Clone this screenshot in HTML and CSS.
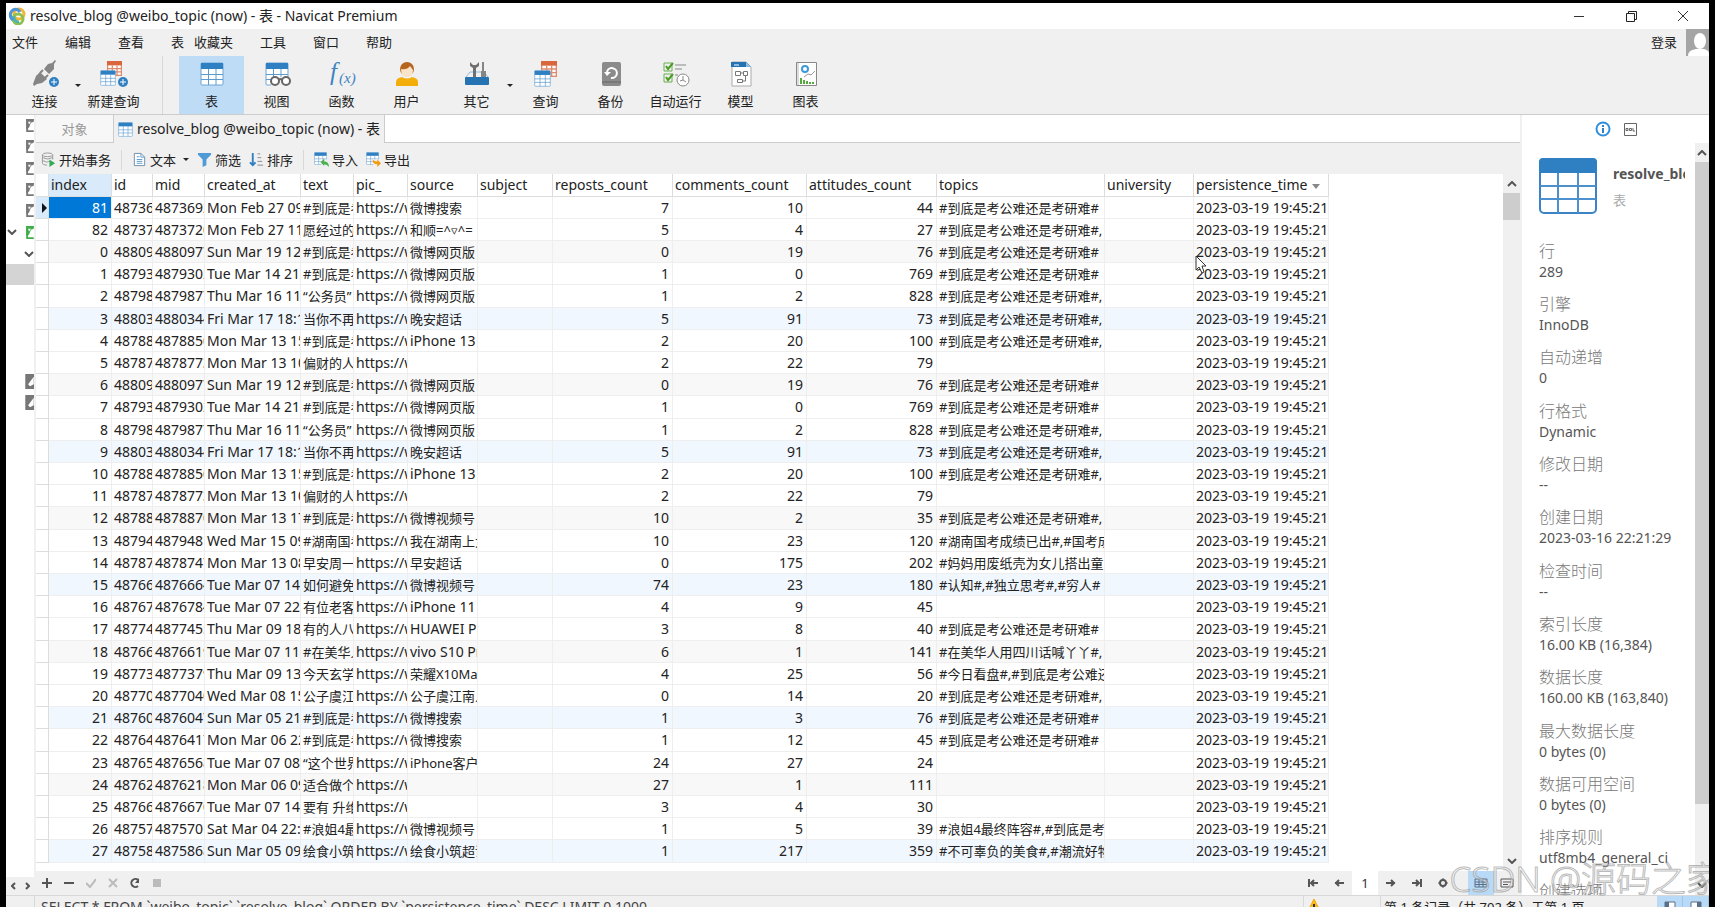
FILE: index.html
```html
<!DOCTYPE html>
<html lang="zh-CN">
<head>
  <meta charset="UTF-8">
  <meta name="viewport" content="width=device-width, initial-scale=1.0">
  <title>resolve_blog @weibo_topic (now) - 表 - Navicat Premium</title>
  <link rel="stylesheet" href="styles.css">
</head>
<body>
  <!-- Shared icons -->
  <svg class="sprite" width="0" height="0">
    <symbol id="i-table" viewBox="0 0 24 24">
      <rect x="1" y="1" width="22" height="22" rx="1" fill="#fff" stroke="#6fa6d3"/>
      <path d="M1 12.500h22M1 17.500h22M8.500 7v16M16 7v16" stroke="#5b9bd0" fill="none"/>
      <rect x="1" y="1" width="22" height="6" fill="#2f7fc3"/>
    </symbol>
    <symbol id="i-table-red" viewBox="0 0 24 24">
      <rect x="1" y="1" width="22" height="22" fill="#fff" stroke="#e08a6c" stroke-width="2"/>
      <path d="M1 12h22M1 17.500h22M8.500 7v16M16 7v16" stroke="#e08a6c" stroke-width="2" fill="none"/>
      <rect x="0" y="0" width="24" height="7" fill="#d9663d"/>
    </symbol>
    <symbol id="i-db" viewBox="0 0 9 16">
      <path d="M9 2H2v12h7" fill="#fff" stroke="currentColor" stroke-width="2"/>
      <path d="M1 1h8v3L6 5 4 10 1 12z" fill="currentColor"/>
      <path d="M3 4h3L4 7z" fill="#fff"/>
    </symbol>
    <symbol id="i-db-off" viewBox="0 0 9 16">
      <path d="M1 1h12v14H1z" fill="#777" stroke="#777" stroke-width="2"/>
      <path d="M3 11L9 3v8l-4 2z" fill="#fff"/>
    </symbol>
    <symbol id="i-up" viewBox="0 0 10 6"><path d="M1 5l4-4 4 4" fill="none" stroke="#555" stroke-width="2"/></symbol>
    <symbol id="i-down" viewBox="0 0 10 6"><path d="M1 1l4 4 4-4" fill="none" stroke="#555" stroke-width="2"/></symbol>
  </svg>

  <div class="window">
    <header class="titlebar">
      <svg class="logo" viewBox="0 0 18 18" fill="none" stroke-width="3">
        <circle cx="11" cy="7" r="5" stroke="#f2b632"/>
        <circle cx="10" cy="12" r="5" stroke="#8cc152"/>
        <path d="M11 15a5 5 0 0 1-5-6" stroke="#4db6ac"/>
        <path d="M5 13a6 6 0 0 1 0-10 5 5 0 0 1 7 2" stroke="#4f93d8"/>
      </svg>
      <h1>resolve_blog @weibo_topic (now) - 表 - Navicat Premium</h1>
      <div class="window-buttons">
        <button aria-label="最小化"><svg width="12" height="12"><path d="M1 6.500h10" stroke="#333"/></svg></button>
        <button aria-label="还原"><svg width="12" height="12" fill="none" stroke="#222"><path d="M1.500 3.500h8v8h-8zM3.500 3v-1.500h8v8H10"/></svg></button>
        <button aria-label="关闭"><svg width="12" height="12"><path d="M1 1l10 10M11 1L1 11" stroke="#333"/></svg></button>
      </div>
    </header>

    <nav class="menubar">
      <button>文件</button>
      <button>编辑</button>
      <button>查看</button>
      <button class="tight">表</button>
      <button>收藏夹</button>
      <button>工具</button>
      <button>窗口</button>
      <button>帮助</button>
      <button class="login">登录</button>
      <svg class="avatar" viewBox="0 0 23 27"><path d="M0 0h23v27H0z" fill="#a5a5a5"/><ellipse cx="14" cy="12" rx="6" ry="8" fill="#fff"/><path d="M2 27c0-5 4-6 8-7h8c3 1 5 2 5 4v3z" fill="#fff"/></svg>
    </nav>

    <div class="toolbar">
      <button class="tool">
        <svg viewBox="0 0 28 28"><g fill="#858585"><path d="M2 24l3-8 4-4 7 7-5 4-5 1-3 2z"/><path d="M13 9l4-5 4-1 3-3 1 1-2 3v5l-5 5z"/></g><path d="M9 13l3-3M14 18l3-3" stroke="#858585" stroke-width="2"/><circle cx="23" cy="22" r="5" fill="#2f7fc3"/><path d="M20 22h6M23 19v6" stroke="#fff"/></svg>
        连接
      </button>
      <i class="caret"></i>
      <button class="tool">
        <svg viewBox="0 0 28 28"><use href="#i-table-red" x="7" y="1" width="15" height="15"/><use href="#i-table" x="0" y="10" width="16" height="16"/><circle cx="23" cy="22" r="5" fill="#2f7fc3"/><path d="M20 22h6M23 19v6" stroke="#fff"/></svg>
        新建查询
      </button>
      <i class="divider"></i>
      <button class="tool active">
        <svg viewBox="0 0 28 28"><use href="#i-table" x="2" y="2" width="24" height="24"/></svg>
        表
      </button>
      <button class="tool">
        <svg viewBox="0 0 28 28"><use href="#i-table" x="2" y="2" width="24" height="24"/><path d="M8 17h20v11H8z" fill="#f0f0f0"/><g fill="#fff" stroke="#666" stroke-width="2"><circle cx="12" cy="21" r="4"/><circle cx="23" cy="21" r="4"/><path d="M16 20q1.500-2 3 0" fill="none"/></g></svg>
        视图
      </button>
      <button class="tool">
        <svg viewBox="0 0 28 28" class="fx"><text x="2" y="20" font-size="25">f</text><text x="11" y="23" font-size="15">(x)</text></svg>
        函数
      </button>
      <button class="tool">
        <svg viewBox="0 0 28 28"><circle cx="14" cy="9" r="7" fill="#b5651d"/><path d="M8 9q6 1 9-3l3 4q0 7-6 7T8 9z" fill="#fbe3c8"/><path d="M3 26v-4q0-4 6-5 5 3 10 0 6 1 6 5v4z" fill="#f4ae0c"/></svg>
        用户
      </button>
      <button class="tool gap">
        <svg viewBox="0 0 28 28"><path d="M3 17l4-5h14l4 5" fill="none" stroke="#8dbce4" stroke-width="1"/><path d="M7 2v4l3 2v9h3V8l3-2V2l-3 3h-3z" fill="#707070"/><path d="M19 2h2v9h2v6h-5v-6h1z" fill="#858585"/><rect x="2" y="17" width="24" height="8" rx="1" fill="#2673b4"/></svg>
        其它
      </button>
      <i class="caret"></i>
      <button class="tool">
        <svg viewBox="0 0 28 28"><use href="#i-table-red" x="9" y="1" width="16" height="16"/><use href="#i-table" x="2" y="10" width="17" height="17"/></svg>
        查询
      </button>
      <button class="tool">
        <svg viewBox="0 0 28 28"><rect x="5" y="2" width="19" height="24" rx="2" fill="#8b8b8b"/><path d="M5 22h19" stroke="#666"/><path d="M10 12a5 5 0 1 1 4 6" fill="none" stroke="#fff" stroke-width="2"/><path d="M7 12h7l-4 4z" fill="#fff"/></svg>
        备份
      </button>
      <button class="tool">
        <svg viewBox="0 0 28 28" fill="none"><path d="M2 3h8v8H2zM2 14h8v8H2z" stroke="#68b04a"/><path d="M4 6l2 3 5-6M4 17l2 3 5-6" stroke="#4c9a2a" stroke-width="2"/><path d="M13 5h11M13 9h7M13 15h3" stroke="#888"/><circle cx="21" cy="20" r="6" fill="#fff" stroke="#888"/><path d="M21 16v4l-3 1M21 20l3 2" stroke="#888"/></svg>
        自动运行
      </button>
      <button class="tool">
        <svg viewBox="0 0 28 28" fill="none"><path d="M5 2h14l5 5v19H5z" fill="#fff" stroke="#aaa"/><path d="M4 2h15l5 5H4z" fill="#2673b4"/><path d="M19 2v5h5z" fill="#8dbce4"/><path d="M7 5h5" stroke="#fff"/><path d="M8.500 11.500h5v4h-5zM16.500 11.500h4v4h-4zM10.500 19.500h5v3h-5zM14 13h2M18.500 16v5H16" stroke="#777"/></svg>
        模型
      </button>
      <button class="tool">
        <svg viewBox="0 0 28 28" fill="none"><path d="M4.500 2.500h20v23h-20z" fill="#fff" stroke="#888"/><path d="M6 3v22" stroke="#bbb"/><circle cx="13" cy="9" r="3" stroke="#3d9bd8" stroke-width="2"/><path d="M12 17l4-3 3 1 4-4" stroke="#999"/><path d="M9 18v6M12 20v4M15 21v3M18 22v2M21 22v2" stroke="#53ab3b" stroke-width="2"/></svg>
        图表
      </button>
    </div>

    <div class="workspace">
      <aside class="tree">
        <ul>
          <li><svg class="db"><use href="#i-db"/></svg></li>
          <li><svg class="db"><use href="#i-db"/></svg></li>
          <li><svg class="db"><use href="#i-db"/></svg></li>
          <li><svg class="db"><use href="#i-db"/></svg></li>
          <li><svg class="db"><use href="#i-db"/></svg></li>
          <li><svg class="chevron"><use href="#i-down"/></svg><svg class="db open"><use href="#i-db"/></svg></li>
          <li><svg class="chevron"><use href="#i-down"/></svg></li>
          <li class="selected"></li>
          <li></li>
          <li></li>
          <li></li>
          <li></li>
          <li><svg class="db"><use href="#i-db-off"/></svg></li>
          <li><svg class="db"><use href="#i-db-off"/></svg></li>
        </ul>
        <div class="tree-scroll">
          <svg width="5" height="8"><path d="M4 1L1 4l3 3" fill="none" stroke="#555" stroke-width="2"/></svg>
          <svg width="5" height="8"><path d="M1 1l3 3-3 3" fill="none" stroke="#555" stroke-width="2"/></svg>
        </div>
      </aside>

      <main class="main">
        <div class="tabs">
          <button class="tab">对象</button>
          <button class="tab current"><svg width="15" height="15"><use href="#i-table"/></svg>resolve_blog @weibo_topic (now) - 表</button>
        </div>

        <div class="actions">
          <button><svg viewBox="0 0 16 16" fill="none"><path d="M1.500 3v9q0 2 5 2M12.500 3v5M1.500 6q5 3 11 0M1.500 9q5 3 8 1" stroke="#999"/><ellipse cx="7" cy="3" rx="5.500" ry="2" stroke="#999"/><path d="M9 8l6 4-6 4z" fill="#35a853"/></svg>开始事务</button>
          <i class="divider"></i>
          <button><svg viewBox="0 0 16 16" fill="none"><path d="M2.500 1.500h7l4 4v9h-11z" fill="#fff" stroke="#6f8ca8"/><path d="M9.500 1.500v4h4M5 8h6M5 10h6M5 12h6M5 5h3" stroke="#5b9bd0"/></svg>文本<i class="caret"></i></button>
          <button><svg viewBox="0 0 16 16"><path d="M1 1h14v2l-5 5v6l-4 2V8L1 3z" fill="#4f9bd8"/></svg>筛选</button>
          <button><svg viewBox="0 0 16 16" fill="none"><path d="M4 1v13M1 11l3 3 3-3" stroke="#2f7fc3" stroke-width="2"/><path d="M9 2h3M9 6h4M9 10h5M9 14h6" stroke="#888"/></svg>排序</button>
          <i class="divider"></i>
          <button><svg viewBox="0 0 16 16"><use href="#i-table" width="14" height="14"/><path d="M8 8h8v8H8z" fill="#f0f0f0"/><path d="M7 11l4-4v3q5 0 5 6-2-3-5-3v2z" fill="#4caf50"/></svg>导入</button>
          <button><svg viewBox="0 0 16 16"><use href="#i-table" width="14" height="14"/><path d="M8 8h8v8H8z" fill="#f0f0f0"/><path d="M16 12l-4 4v-3q-5 0-5-5 2 2 5 2V8z" fill="#f39c12"/></svg>导出</button>
        </div>

        <div class="grid-area">
          <div class="grid-body">
            <table class="grid">
              <colgroup>
                <col class="c-mark"><col class="c-index"><col class="c-id"><col class="c-mid"><col class="c-created"><col class="c-text"><col class="c-pic"><col class="c-source"><col class="c-subject"><col class="c-reposts"><col class="c-comments"><col class="c-attitudes"><col class="c-topics"><col class="c-university"><col class="c-time">
              </colgroup>
              <thead>
                <tr><th></th><th class="sel">index</th><th>id</th><th>mid</th><th>created_at</th><th>text</th><th>pic_</th><th>source</th><th>subject</th><th>reposts_count</th><th>comments_count</th><th>attitudes_count</th><th>topics</th><th>university</th><th>persistence_time <i class="sort"></i></th></tr>
              </thead>
              <tbody>
                <tr><td class="mark"><i></i></td><td class="sel">81</td><td>487369</td><td>4873692</td><td>Mon Feb 27 09</td><td>#到底是考</td><td>https://w</td><td class="cn">微博搜索</td><td></td><td>7</td><td>10</td><td>44</td><td>#到底是考公难还是考研难#</td><td></td><td>2023-03-19 19:45:21</td></tr>
                <tr><td></td><td>82</td><td>487372</td><td>4873720</td><td>Mon Feb 27 11</td><td>愿经过的</td><td>https://w</td><td class="cn">和顺=^▿^=</td><td></td><td>5</td><td>4</td><td>27</td><td>#到底是考公难还是考研难#,</td><td></td><td>2023-03-19 19:45:21</td></tr>
                <tr><td></td><td>0</td><td>488097</td><td>4880977</td><td>Sun Mar 19 12</td><td>#到底是考</td><td>https://w</td><td class="cn">微博网页版</td><td></td><td>0</td><td>19</td><td>76</td><td>#到底是考公难还是考研难#</td><td></td><td>2023-03-19 19:45:21</td></tr>
                <tr><td></td><td>1</td><td>487930</td><td>4879302</td><td>Tue Mar 14 21</td><td>#到底是考</td><td>https://w</td><td class="cn">微博网页版</td><td></td><td>1</td><td>0</td><td>769</td><td>#到底是考公难还是考研难#</td><td></td><td>2023-03-19 19:45:21</td></tr>
                <tr><td></td><td>2</td><td>487987</td><td>4879877</td><td>Thu Mar 16 11</td><td>“公务员”</td><td>https://w</td><td class="cn">微博网页版</td><td></td><td>1</td><td>2</td><td>828</td><td>#到底是考公难还是考研难#,</td><td></td><td>2023-03-19 19:45:21</td></tr>
                <tr><td></td><td>3</td><td>488034</td><td>4880344</td><td>Fri Mar 17 18:1</td><td>当你不再</td><td>https://w</td><td class="cn">晚安超话</td><td></td><td>5</td><td>91</td><td>73</td><td>#到底是考公难还是考研难#,</td><td></td><td>2023-03-19 19:45:21</td></tr>
                <tr><td></td><td>4</td><td>487885</td><td>4878850</td><td>Mon Mar 13 15</td><td>#到底是考</td><td>https://w</td><td>iPhone 13</td><td></td><td>2</td><td>20</td><td>100</td><td>#到底是考公难还是考研难#,</td><td></td><td>2023-03-19 19:45:21</td></tr>
                <tr><td></td><td>5</td><td>487877</td><td>4878773</td><td>Mon Mar 13 10</td><td>偏财的人</td><td>https://w</td><td></td><td></td><td>2</td><td>22</td><td>79</td><td></td><td></td><td>2023-03-19 19:45:21</td></tr>
                <tr><td></td><td>6</td><td>488097</td><td>4880977</td><td>Sun Mar 19 12</td><td>#到底是考</td><td>https://w</td><td class="cn">微博网页版</td><td></td><td>0</td><td>19</td><td>76</td><td>#到底是考公难还是考研难#</td><td></td><td>2023-03-19 19:45:21</td></tr>
                <tr><td></td><td>7</td><td>487930</td><td>4879302</td><td>Tue Mar 14 21</td><td>#到底是考</td><td>https://w</td><td class="cn">微博网页版</td><td></td><td>1</td><td>0</td><td>769</td><td>#到底是考公难还是考研难#</td><td></td><td>2023-03-19 19:45:21</td></tr>
                <tr><td></td><td>8</td><td>487987</td><td>4879877</td><td>Thu Mar 16 11</td><td>“公务员”</td><td>https://w</td><td class="cn">微博网页版</td><td></td><td>1</td><td>2</td><td>828</td><td>#到底是考公难还是考研难#,</td><td></td><td>2023-03-19 19:45:21</td></tr>
                <tr><td></td><td>9</td><td>488034</td><td>4880344</td><td>Fri Mar 17 18:1</td><td>当你不再</td><td>https://w</td><td class="cn">晚安超话</td><td></td><td>5</td><td>91</td><td>73</td><td>#到底是考公难还是考研难#,</td><td></td><td>2023-03-19 19:45:21</td></tr>
                <tr><td></td><td>10</td><td>487885</td><td>4878850</td><td>Mon Mar 13 15</td><td>#到底是考</td><td>https://w</td><td>iPhone 13</td><td></td><td>2</td><td>20</td><td>100</td><td>#到底是考公难还是考研难#,</td><td></td><td>2023-03-19 19:45:21</td></tr>
                <tr><td></td><td>11</td><td>487877</td><td>4878773</td><td>Mon Mar 13 10</td><td>偏财的人</td><td>https://w</td><td></td><td></td><td>2</td><td>22</td><td>79</td><td></td><td></td><td>2023-03-19 19:45:21</td></tr>
                <tr><td></td><td>12</td><td>487887</td><td>4878870</td><td>Mon Mar 13 17</td><td>#到底是考</td><td>https://w</td><td class="cn">微博视频号</td><td></td><td>10</td><td>2</td><td>35</td><td>#到底是考公难还是考研难#,</td><td></td><td>2023-03-19 19:45:21</td></tr>
                <tr><td></td><td>13</td><td>487948</td><td>4879481</td><td>Wed Mar 15 09</td><td>#湖南国考</td><td>https://w</td><td class="cn">我在湖南上大</td><td></td><td>10</td><td>23</td><td>120</td><td>#湖南国考成绩已出#,#国考成</td><td></td><td>2023-03-19 19:45:21</td></tr>
                <tr><td></td><td>14</td><td>487874</td><td>4878747</td><td>Mon Mar 13 08</td><td>早安周一</td><td>https://w</td><td class="cn">早安超话</td><td></td><td>0</td><td>175</td><td>202</td><td>#妈妈用废纸壳为女儿搭出童</td><td></td><td>2023-03-19 19:45:21</td></tr>
                <tr><td></td><td>15</td><td>487666</td><td>4876664</td><td>Tue Mar 07 14</td><td>如何避免</td><td>https://w</td><td class="cn">微博视频号</td><td></td><td>74</td><td>23</td><td>180</td><td>#认知#,#独立思考#,#穷人#</td><td></td><td>2023-03-19 19:45:21</td></tr>
                <tr><td></td><td>16</td><td>487678</td><td>4876784</td><td>Tue Mar 07 22</td><td>有位老客</td><td>https://w</td><td>iPhone 11</td><td></td><td>4</td><td>9</td><td>45</td><td></td><td></td><td>2023-03-19 19:45:21</td></tr>
                <tr><td></td><td>17</td><td>487745</td><td>4877455</td><td>Thu Mar 09 18</td><td>有的人八</td><td>https://w</td><td>HUAWEI P5</td><td></td><td>3</td><td>8</td><td>40</td><td>#到底是考公难还是考研难#</td><td></td><td>2023-03-19 19:45:21</td></tr>
                <tr><td></td><td>18</td><td>487661</td><td>4876619</td><td>Tue Mar 07 11</td><td>#在美华人</td><td>https://w</td><td>vivo S10 Pro</td><td></td><td>6</td><td>1</td><td>141</td><td>#在美华人用四川话喊丫丫#,</td><td></td><td>2023-03-19 19:45:21</td></tr>
                <tr><td></td><td>19</td><td>487737</td><td>4877379</td><td>Thu Mar 09 13</td><td>今天玄学</td><td>https://w</td><td class="cn">荣耀X10Max</td><td></td><td>4</td><td>25</td><td>56</td><td>#今日看盘#,#到底是考公难还</td><td></td><td>2023-03-19 19:45:21</td></tr>
                <tr><td></td><td>20</td><td>487704</td><td>4877040</td><td>Wed Mar 08 15</td><td>公子虞江</td><td>https://w</td><td class="cn">公子虞江南人</td><td></td><td>0</td><td>14</td><td>20</td><td>#到底是考公难还是考研难#,</td><td></td><td>2023-03-19 19:45:21</td></tr>
                <tr><td></td><td>21</td><td>487604</td><td>4876047</td><td>Sun Mar 05 21</td><td>#到底是考</td><td>https://w</td><td class="cn">微博搜索</td><td></td><td>1</td><td>3</td><td>76</td><td>#到底是考公难还是考研难#</td><td></td><td>2023-03-19 19:45:21</td></tr>
                <tr><td></td><td>22</td><td>487641</td><td>4876417</td><td>Mon Mar 06 22</td><td>#到底是考</td><td>https://w</td><td class="cn">微博搜索</td><td></td><td>1</td><td>12</td><td>45</td><td>#到底是考公难还是考研难#</td><td></td><td>2023-03-19 19:45:21</td></tr>
                <tr><td></td><td>23</td><td>487656</td><td>4876568</td><td>Tue Mar 07 08</td><td>“这个世界</td><td>https://w</td><td class="cn">iPhone客户</td><td></td><td>24</td><td>27</td><td>24</td><td></td><td></td><td>2023-03-19 19:45:21</td></tr>
                <tr><td></td><td>24</td><td>487621</td><td>4876218</td><td>Mon Mar 06 09</td><td>适合做个</td><td>https://w</td><td></td><td></td><td>27</td><td>1</td><td>111</td><td></td><td></td><td>2023-03-19 19:45:21</td></tr>
                <tr><td></td><td>25</td><td>487667</td><td>4876670</td><td>Tue Mar 07 14</td><td>要有 升维</td><td>https://w</td><td></td><td></td><td>3</td><td>4</td><td>30</td><td></td><td></td><td>2023-03-19 19:45:21</td></tr>
                <tr><td></td><td>26</td><td>487570</td><td>4875701</td><td>Sat Mar 04 22:</td><td>#浪姐4最</td><td>https://w</td><td class="cn">微博视频号</td><td></td><td>1</td><td>5</td><td>39</td><td>#浪姐4最终阵容#,#到底是考</td><td></td><td>2023-03-19 19:45:21</td></tr>
                <tr><td></td><td>27</td><td>487586</td><td>4875868</td><td>Sun Mar 05 09</td><td>绘食小筑</td><td>https://w</td><td class="cn">绘食小筑超话</td><td></td><td>1</td><td>217</td><td>359</td><td>#不可辜负的美食#,#潮流好物</td><td></td><td>2023-03-19 19:45:21</td></tr>
              </tbody>
            </table>
          </div>
          <div class="scrollbar">
            <svg width="10" height="6"><use href="#i-up"/></svg>
            <div class="thumb short"></div>
            <svg width="10" height="6"><use href="#i-down"/></svg>
          </div>
        </div>

        <div class="record-bar">
          <div class="edit-buttons">
            <button aria-label="添加"><svg viewBox="0 0 10 10"><path d="M5 0v10M0 5h10" stroke="#555" stroke-width="2"/></svg></button>
            <button aria-label="删除"><svg viewBox="0 0 10 10"><path d="M0 5h10" stroke="#555" stroke-width="2"/></svg></button>
            <button aria-label="应用"><svg viewBox="0 0 10 10"><path d="M0 5l4 4 6-8" fill="none" stroke="#bbb" stroke-width="2"/></svg></button>
            <button aria-label="放弃"><svg viewBox="0 0 10 10"><path d="M1 1l8 8M9 1L1 9" stroke="#bbb" stroke-width="2"/></svg></button>
            <button aria-label="刷新"><svg viewBox="0 0 10 10"><path d="M8 8a4 4 0 1 1 0-6" fill="none" stroke="#555" stroke-width="2"/><path d="M9 0v5H5z" fill="#555"/></svg></button>
            <button aria-label="停止"><svg viewBox="0 0 10 10"><path d="M1 1h8v8H1z" fill="#bbb"/></svg></button>
          </div>
          <div class="page-buttons">
            <button aria-label="首页"><svg viewBox="0 0 10 10"><path d="M1 1v8M3 5h7M6 2L3 5l3 3" fill="none" stroke="#555" stroke-width="2"/></svg></button>
            <button aria-label="上一页"><svg viewBox="0 0 10 10"><path d="M1 5h9M5 2L2 5l3 3" fill="none" stroke="#555" stroke-width="2"/></svg></button>
            <input type="text" value="1" aria-label="页码">
            <button aria-label="下一页"><svg viewBox="0 0 10 10"><path d="M0 5h9M5 2l3 3-3 3" fill="none" stroke="#555" stroke-width="2"/></svg></button>
            <button aria-label="末页"><svg viewBox="0 0 10 10"><path d="M9 1v8M0 5h7M4 2l3 3-3 3" fill="none" stroke="#555" stroke-width="2"/></svg></button>
            <button aria-label="设置"><svg viewBox="0 0 10 10"><circle cx="5" cy="5" r="3" fill="none" stroke="#555" stroke-width="2"/><path d="M5 0v2M5 8v2M0 5h2M8 5h2" stroke="#555"/></svg></button>
            <button class="view on" aria-label="网格查看"><svg viewBox="0 0 14 10"><path d="M1 1h12v8H1zM1 4h12M1 6.500h12M5 1v8M9 1v8" fill="none" stroke="#5b6f86"/></svg></button>
            <button class="view" aria-label="表单查看"><svg viewBox="0 0 14 10"><path d="M1 1h12v8H1zM3 4h8M3 6.500h5" fill="none" stroke="#555"/></svg></button>
          </div>
        </div>
      </main>

      <aside class="info">
        <div class="info-tabs">
          <button aria-label="常规"><svg width="16" height="16"><circle cx="8" cy="8" r="6.500" fill="#fff" stroke="#2f8fdc" stroke-width="2"/><path d="M8 4v2M8 7v5" stroke="#2f7fc3" stroke-width="2"/></svg></button>
          <button aria-label="DDL"><svg width="13" height="13"><path d="M.500.500h12v12H.500z" fill="#fff" stroke="#666"/><path d="M2 5.500h2v2H2zM5.500 5.500h2v2h-2zM9 5v3h2" fill="none" stroke="#666"/></svg></button>
        </div>
        <div class="info-main">
          <div class="info-content">
            <div class="info-head">
              <svg viewBox="0 0 58 56"><rect x="1" y="1" width="56" height="54" rx="4" fill="#fff" stroke="#3b83c4" stroke-width="2"/><path d="M1 28h56M1 41h56M19 15v40M39 15v40" stroke="#4c91cd" stroke-width="2"/><path d="M0 15V4q0-4 4-4h50q4 0 4 4v11z" fill="#2f7fc3"/></svg>
              <div>
                <h2>resolve_blog</h2>
                <p>表</p>
              </div>
            </div>
            <dl>
              <div><dt>行</dt><dd>289</dd></div>
              <div><dt>引擎</dt><dd>InnoDB</dd></div>
              <div><dt>自动递增</dt><dd>0</dd></div>
              <div><dt>行格式</dt><dd>Dynamic</dd></div>
              <div><dt>修改日期</dt><dd>--</dd></div>
              <div><dt>创建日期</dt><dd>2023-03-16 22:21:29</dd></div>
              <div><dt>检查时间</dt><dd>--</dd></div>
              <div><dt>索引长度</dt><dd>16.00 KB (16,384)</dd></div>
              <div><dt>数据长度</dt><dd>160.00 KB (163,840)</dd></div>
              <div><dt>最大数据长度</dt><dd>0 bytes (0)</dd></div>
              <div><dt>数据可用空间</dt><dd>0 bytes (0)</dd></div>
              <div><dt>排序规则</dt><dd>utf8mb4_general_ci</dd></div>
              <div><dt>创建选项</dt><dd></dd></div>
            </dl>
          </div>
          <div class="scrollbar narrow">
            <svg width="10" height="6"><use href="#i-up"/></svg>
            <div class="thumb long"></div>
            <svg width="10" height="6"><use href="#i-down"/></svg>
          </div>
        </div>
      </aside>
    </div>

    <footer class="status">
      <span class="sql">SELECT * FROM `weibo_topic`.`resolve_blog` ORDER BY `persistence_time` DESC LIMIT 0,1000</span>
      <span class="warn"><svg width="16" height="16"><path d="M8 1l7 14H1z" fill="#fbbc1c" stroke="#f4a900"/><path d="M8 6v5M8 12v1" stroke="#333" stroke-width="2"/></svg></span>
      <span class="records">第 1 条记录（共 702 条）于第 1 页</span>
      <button aria-label="左侧面板"><svg width="12" height="12"><path d="M1 1h10v10H1z" fill="#fff" stroke="#5b6f86"/><path d="M1 1h4v10H1z" fill="#5b6f86"/></svg></button>
      <button aria-label="右侧面板"><svg width="12" height="12"><path d="M1 1h10v10H1z" fill="#fff" stroke="#5b6f86"/><path d="M7 1h4v10H7z" fill="#5b6f86"/></svg></button>
    </footer>

    <svg class="cursor" width="13" height="20"><path d="M1 1v14l3-3 3 6 2-1-2-6h4z" fill="#fff" stroke="#333"/></svg>
    <div class="watermark">CSDN @源码之家</div>
  </div>
</body>
</html>
```

FILE: styles.css
```css
* {
  box-sizing: border-box;
}
body {
  margin: 0;
  height: 100vh;
  overflow: hidden;
  background: #000;
  color: #222;
  font-family: "Noto Sans", "Noto Sans CJK SC", sans-serif;
  font-size: 13px;
  line-height: 18px;
}
button {
  padding: 0;
  border: none;
  background: none;
  color: inherit;
  font: inherit;
}
h1, h2, p, ul, dl, dd {
  margin: 0;
  padding: 0;
}
.sprite {
  position: absolute;
}
.window {
  position: relative;
  display: flex;
  flex-direction: column;
  height: calc(100vh - 3px);
  margin: 3px 6px 0;
  overflow: hidden;
  background: #f0f0f0;
}

/* Title and menu */
.titlebar {
  display: flex;
  align-items: center;
  height: 26px;
  padding-left: 2px;
  background: #fff;
}
.logo {
  width: 18px;
  height: 18px;
}
.titlebar h1 {
  flex: 1;
  margin-left: 4px;
  font-size: 14px;
  font-weight: 400;
}
.window-buttons {
  display: flex;
}
.window-buttons button {
  display: flex;
  align-items: center;
  justify-content: center;
  width: 52px;
  height: 26px;
}
.menubar {
  display: flex;
  align-items: center;
  gap: 27px;
  height: 27px;
  padding: 0 0 1px 6px;
}
.menubar .tight {
  margin-right: -17px;
}
.menubar .login {
  margin-left: auto;
}
.avatar {
  width: 23px;
  height: 27px;
  margin-left: -18px;
}

/* Main toolbar */
.toolbar {
  display: flex;
  height: 59px;
  padding-left: 6px;
  border-bottom: 1px solid #ccc;
}
.tool {
  display: flex;
  flex-direction: column;
  align-items: center;
  gap: 4px;
  width: 65px;
  padding-top: 4px;
}
.tool svg {
  width: 28px;
  height: 28px;
}
.tool.active {
  background: #bfdcf6;
}
.tool.gap {
  margin-left: 5px;
}
.fx text {
  fill: #3c83c0;
  font-family: "Liberation Serif", serif;
  font-style: italic;
}
.caret {
  border: 3px solid transparent;
  border-top: 3px solid #222;
  border-bottom: none;
}
.toolbar .caret {
  align-self: center;
  margin-left: -2px;
}
.divider {
  width: 1px;
  margin: 0 16px;
  background: #d8d8d8;
}

/* Connection tree */
.workspace {
  display: flex;
  flex: 1;
  min-height: 0;
}
.tree {
  display: flex;
  flex-direction: column;
  width: 30px;
  border-right: 2px solid #f0f0f0;
}
.tree ul {
  flex: 1;
  background: #fff;
  list-style: none;
}
.tree li {
  display: flex;
  align-items: center;
  justify-content: flex-end;
  gap: 8px;
  height: 21px;
}
.tree li:nth-child(3n) {
  height: 22px;
}
.tree .selected {
  background: #d4d4d4;
}
.db {
  width: 9px;
  height: 15px;
  color: #777;
}
.db.open {
  color: #3fae49;
}
.chevron {
  width: 10px;
  height: 6px;
}
.tree-scroll {
  display: flex;
  align-items: center;
  justify-content: space-around;
  height: 18px;
}

/* Tabs and actions */
.main {
  display: flex;
  flex: 1;
  flex-direction: column;
  min-width: 0;
  border-right: 2px solid #f0f0f0;
}
.tabs {
  display: flex;
  height: 28px;
  border-bottom: 1px solid #ccc;
  background: #fff;
}
.tab {
  width: 78px;
  border-right: 1px solid #ccc;
  background: #f7f7f7;
  color: #999;
}
.tab.current {
  display: flex;
  align-items: center;
  gap: 4px;
  width: auto;
  height: 28px;
  padding: 0 4px;
  background: #f0f0f0;
  color: #222;
  font-size: 14px;
}
.actions {
  display: flex;
  align-items: center;
  gap: 8px;
  height: 31px;
  padding: 2px 0 0 5px;
}
.actions button {
  display: flex;
  align-items: center;
  gap: 3px;
}
.actions svg {
  width: 15px;
  height: 15px;
}
.actions .caret {
  margin-left: 4px;
}
.actions .divider {
  height: 20px;
  margin: 0 2px;
}

/* Data grid */
.grid-area {
  display: flex;
  flex: 1;
  min-height: 0;
}
.grid-body {
  flex: 1;
  min-width: 0;
  overflow: hidden;
  background: #fff;
}
.grid {
  width: 1293px;
  table-layout: fixed;
  border-collapse: separate;
  border-spacing: 0;
  font-size: 14px;
}
.c-mark { width: 13px; }
.c-index { width: 63px; }
.c-id { width: 41px; }
.c-mid { width: 52px; }
.c-created { width: 96px; }
.c-text { width: 53px; }
.c-pic { width: 54px; }
.c-source { width: 70px; }
.c-subject { width: 75px; }
.c-reposts { width: 120px; }
.c-comments { width: 134px; }
.c-attitudes { width: 130px; }
.c-topics { width: 168px; }
.c-university { width: 89px; }
.c-time { width: 135px; }
.grid th, .grid td {
  height: 22px;
  padding: 0 0 0 2px;
  overflow: hidden;
  border-right: 1px solid #eee;
  border-bottom: 1px solid #eee;
  line-height: 20px;
  text-align: left;
  white-space: nowrap;
}
.grid th {
  height: 23px;
  border-color: #ddd;
  font-weight: 400;
}
.grid tr:nth-child(5n) td {
  height: 23px;
}
.grid th.sel {
  background: #d9eafa;
}
.grid tr:nth-child(6n+3) td {
  background: #f8f8f8;
}
.grid tr:nth-child(6n) td {
  background: #f1f7fe;
}
.grid tr td:first-child {
  padding: 0;
  border-color: #ddd;
  background: #fff;
}
.grid td:nth-child(2),
.grid td:nth-child(10),
.grid td:nth-child(11),
.grid td:nth-child(12) {
  padding-right: 3px;
  text-align: right;
}
.grid td:nth-child(6),
.grid td:nth-child(13),
.grid td.cn {
  font-size: 13px;
}
.grid td.sel {
  background: #0078d7;
  color: #fff;
}
.grid td.mark i {
  display: block;
  margin-left: 6px;
  width: 0;
  border: 5px solid transparent;
  border-left-color: #111;
  border-right: none;
}
.grid tr td.mark {
  background: #d9eafa;
}
.sort {
  display: inline-block;
  margin-left: 1px;
  border: 4px solid transparent;
  border-top: 5px solid #888;
  border-bottom: none;
  vertical-align: middle;
}
.scrollbar {
  display: flex;
  flex-direction: column;
  align-items: center;
  gap: 6px;
  width: 17px;
  padding: 7px 0;
  background: #f0f0f0;
}
.scrollbar svg {
  flex: none;
}
.thumb {
  width: 100%;
  background: #cdcdcd;
}
.thumb.short {
  height: 27px;
}
.thumb.long {
  height: 87%;
}
.scrollbar svg:last-child {
  margin-top: auto;
}

/* Record bar */
.record-bar {
  display: flex;
  justify-content: space-between;
  height: 24px;
}
.edit-buttons, .page-buttons {
  display: flex;
}
.record-bar button {
  display: flex;
  align-items: center;
  justify-content: center;
  width: 22px;
}
.record-bar .page-buttons button {
  width: 26px;
}
.record-bar svg {
  width: 10px;
  height: 10px;
}
.record-bar .view svg {
  width: 14px;
}
.record-bar .on {
  margin-left: 12px;
  background: #b9daf7;
}
.record-bar input {
  width: 26px;
  padding: 0;
  border: none;
  background: #fff;
  color: #333;
  font: inherit;
  text-align: center;
}

/* Info panel */
.info {
  display: flex;
  flex-direction: column;
  width: 187px;
  background: #fff;
}
.info-tabs {
  display: flex;
  align-items: center;
  justify-content: center;
  gap: 13px;
  height: 28px;
}
.info-tabs button {
  display: flex;
}
.info-main {
  display: flex;
  flex: 1;
  min-height: 0;
}
.info-content {
  flex: 1;
  min-width: 0;
  padding: 15px 10px 0 17px;
  overflow: hidden;
}
.info-head {
  display: flex;
  gap: 16px;
  height: 82px;
}
.info-head svg {
  flex: none;
  width: 58px;
  height: 56px;
}
.info-head div {
  min-width: 0;
}
.info-head h2 {
  margin: 6px 0 7px;
  overflow: hidden;
  color: #555;
  font-size: 14px;
  line-height: 20px;
}
.info-head p {
  color: #aaa;
}
.info dl div {
  height: 53px;
}
.info dl div:nth-child(3n) {
  height: 54px;
}
.info dt {
  color: #777;
  font-size: 16px;
  font-weight: 300;
  line-height: 22px;
}
.info dd {
  color: #555;
  font-size: 14px;
  line-height: 20px;
  white-space: nowrap;
}
.scrollbar.narrow {
  width: 14px;
}

/* Status bar */
.status {
  display: flex;
  height: 12px;
  overflow: hidden;
  border-top: 1px solid #d8d8d8;
  line-height: 22px;
}
.sql {
  flex: 1;
  margin-left: 28px;
  padding-left: 6px;
  border-left: 1px solid #d8d8d8;
  color: #444;
  font-size: 14px;
}
.warn {
  width: 77px;
  padding: 2px;
  border-left: 1px solid #d8d8d8;
}
.records {
  width: 277px;
  padding-left: 3px;
  border-left: 1px solid #d8d8d8;
}
.status button {
  width: 26px;
  height: 22px;
  border-right: 1px solid #9cc8ee;
  background: #b9daf7;
}
.status button svg {
  display: block;
  margin: 4px auto;
}

/* Overlays */
.cursor {
  position: absolute;
  top: 252px;
  left: 1189px;
}
.watermark {
  position: absolute;
  right: -12px;
  bottom: 8px;
  color: rgba(255, 255, 255, 0.4);
  font-size: 35px;
  font-weight: 300;
  line-height: 40px;
  white-space: nowrap;
  -webkit-text-stroke: 1px rgba(140, 140, 140, 0.6);
}
```
